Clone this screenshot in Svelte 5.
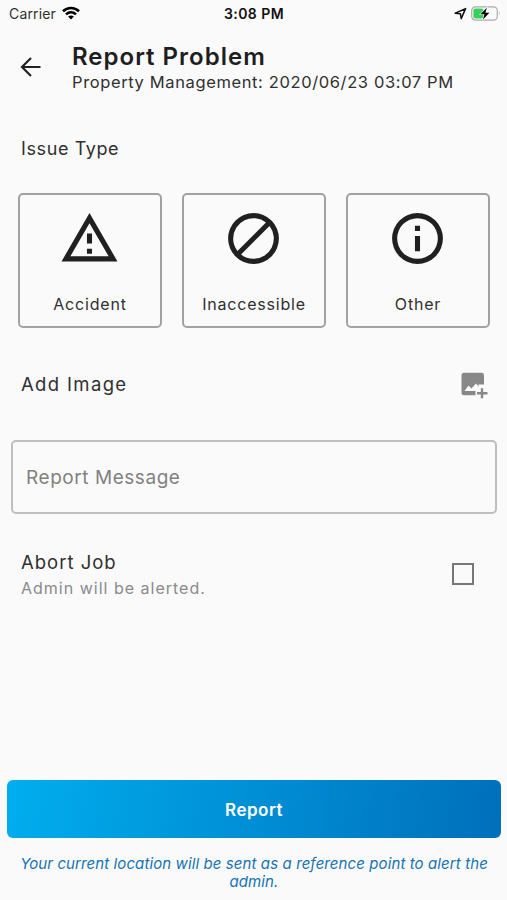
<script>
  let message = "";
  let abortJob = false;
  let selected = null;

  const issueTypes = [
    {
      label: "Accident",
      icon: "M12 5.99L19.53 19H4.47L12 5.99M12 2L1 21h22L12 2zm1 14h-2v2h2v-2zm0-6h-2v4h2v-4z",
    },
    {
      label: "Inaccessible",
      icon: "M12 2a10 10 0 1 0 0 20 10 10 0 0 0 0-20zM4 12a8 8 0 0 1 12.9-6.31L5.69 16.9A7.9 7.9 0 0 1 4 12zm8 8a7.9 7.9 0 0 1-4.9-1.69L18.31 7.1A8 8 0 0 1 12 20z",
    },
    {
      label: "Other",
      icon: "M11 7h2v2h-2zm0 4h2v6h-2zm1-9a10 10 0 1 0 0 20 10 10 0 0 0 0-20zm0 18a8 8 0 1 1 0-16 8 8 0 0 1 0 16z",
    },
  ];
</script>

<div class="screen">
  <div class="statusBar">
    <div class="carrier">
      <span>Carrier</span>
      <svg width="18" height="14" viewBox="0 0 18 14">
        <g fill="none" stroke="#000" stroke-width="2.6">
          <path d="M1 5.2C5.5 .9 12.5 .9 17 5.2" />
          <path d="M4 8.4C6.9 5.7 11.1 5.7 14 8.4" />
        </g>
        <path d="M9 13.4L6.1 10.6Q9 8.2 11.9 10.6z" />
      </svg>
    </div>
    <span class="time">3:08 PM</span>
    <div class="indicators">
      <svg width="13" height="13" viewBox="0 0 13 13">
        <path d="M1.2 6.3L11.6 1.6L7.2 11.6L6.4 6.7z" fill="none" stroke="#111" stroke-width="1.5" stroke-linejoin="round" />
      </svg>
      <svg width="30" height="15" viewBox="0 0 30 15">
        <rect x=".7" y=".9" width="25.6" height="13.2" rx="3.8" fill="none" stroke="#aaa" stroke-width="1.2" />
        <path d="M28 5.3q1.8 2.2 0 4.4z" fill="#aaa" />
        <rect x="2.4" y="2.6" width="10" height="9.8" rx="2" fill="#34d15c" />
        <path d="M15.8 1.8L9.4 8.2h4l-1.4 5.2L18.4 6.7h-4z" stroke="#fafafa" stroke-width="1.2" paint-order="stroke" />
      </svg>
    </div>
  </div>

  <header>
    <button class="back" aria-label="Back">
      <svg width="22" height="22" viewBox="0 0 22 22" fill="none" stroke="#222" stroke-width="2.2">
        <path d="M20.5 11H2.5M11 2L2 11l9 9" />
      </svg>
    </button>
    <div>
      <h1>Report Problem</h1>
      <p class="subtitle">Property Management: 2020/06/23 03:07 PM</p>
    </div>
  </header>

  <h2 class="issueTitle">Issue Type</h2>
  <div class="issues">
    {#each issueTypes as issue, index}
      <button class="issue" class:selected={selected === index} on:click={() => (selected = index)}>
        <svg width="61" height="61" viewBox="0 0 24 24"><path d={issue.icon} fill-rule="evenodd" /></svg>
        <span>{issue.label}</span>
      </button>
    {/each}
  </div>

  <div class="addImage">
    <h2>Add Image</h2>
    <button aria-label="Add image">
      <svg width="28" height="28" viewBox="0 0 28 28">
        <rect x="1.5" y="1.8" width="22.5" height="22.5" rx="2.5" fill="#888" />
        <path d="M4.500 20l4-5.500 3 3 4.500-5 3 3.500 3-1.500V20z" fill="#fafafa" />
        <path d="M15.500 17.500h3v-4h8v14h-11z" fill="#fafafa" />
        <path d="M22 17.300v10M17 22.300h10.500" stroke="#888" stroke-width="2.400" />
      </svg>
    </button>
  </div>

  <input class="message" bind:value={message} type="text" placeholder="Report Message" />

  <div class="abort">
    <div>
      <h2>Abort Job</h2>
      <p>Admin will be alerted.</p>
    </div>
    <input type="checkbox" bind:checked={abortJob} aria-label="Abort Job" />
  </div>

  <footer>
    <button class="report">Report</button>
    <p>Your current location will be sent as a reference point to alert the admin.</p>
  </footer>
</div>

<style>
  :global(body) {
    background: #fafafa;
  }
  .screen {
    display: flex;
    flex-direction: column;
    box-sizing: border-box;
    height: 900px;
    background: #fafafa;
    color: #303030;
    font-family: Inter, "Open Sans", sans-serif;
    overflow: hidden;
  }
  h1, h2, p {
    margin: 0;
  }
  button {
    padding: 0;
    border: none;
    background: none;
    color: inherit;
    font-family: inherit;
    cursor: pointer;
  }
  svg {
    display: block;
  }

  .statusBar {
    display: grid;
    grid-template-columns: 1fr auto 1fr;
    align-items: center;
    height: 27px;
    padding: 0 6px 0 9px;
    font-size: 14px;
  }
  .carrier {
    display: flex;
    align-items: center;
    gap: 6px;
    letter-spacing: 0.15px;
  }
  .carrier svg {
    margin-top: -2px;
  }
  .time {
    font-weight: 600;
    color: #111;
    letter-spacing: 0.45px;
    margin-right: 2px;
  }
  .indicators {
    display: flex;
    align-items: center;
    justify-content: flex-end;
    gap: 4px;
  }

  header {
    display: flex;
    height: 78px;
    padding: 16px 0 0 20px;
    box-sizing: border-box;
  }
  .back {
    width: 52px;
    height: 48px;
  }
  h1 {
    font-size: 24px;
    font-weight: 600;
    line-height: 28px;
    letter-spacing: 1px;
    color: #1e1e1e;
  }
  .subtitle {
    font-size: 16.5px;
    line-height: 23px;
    letter-spacing: 0.62px;
    white-space: nowrap;
  }
  h2 {
    font-size: 18.5px;
    font-weight: 400;
    line-height: 26px;
    letter-spacing: 1px;
  }
  .issueTitle {
    margin: 31px 21px 31px;
    font-size: 18px;
    letter-spacing: 0.6px;
  }

  .issues {
    display: flex;
    gap: 20px;
    padding-left: 18px;
  }
  .issue {
    display: flex;
    flex-direction: column;
    align-items: center;
    flex-shrink: 0;
    box-sizing: border-box;
    width: 144px;
    height: 135px;
    padding-top: 13px;
    border: 2px solid #a2a2a2;
    border-radius: 5px;
    font-size: 16px;
    line-height: 20px;
    letter-spacing: 0.8px;
  }
  .issue svg {
    fill: #202020;
    margin: 0 1px 25px 0;
  }
  .issue.selected {
    border-color: #0070bb;
  }

  .addImage {
    display: flex;
    align-items: center;
    justify-content: space-between;
    margin: 43px 19px 0 21px;
    height: 28px;
  }
  .addImage h2 {
    margin-top: -2px;
    letter-spacing: 1.35px;
  }

  .message {
    box-sizing: border-box;
    margin: 41px 10px 0 11px;
    height: 74px;
    padding: 0 13px;
    border: 2px solid #bebebe;
    border-radius: 5px;
    background: transparent;
    color: #303030;
    font-family: inherit;
    font-size: 19px;
    letter-spacing: 0.55px;
  }
  .message::placeholder {
    color: #818181;
    opacity: 1;
  }

  .abort {
    display: flex;
    justify-content: space-between;
    align-items: center;
    margin: 35px 33px 0 21px;
  }
  .abort p {
    color: #8a8a8a;
    font-size: 16px;
    line-height: 26px;
    letter-spacing: 1px;
  }
  .abort input {
    appearance: none;
    width: 22px;
    height: 22px;
    margin: -2px 0 0;
    border: 2px solid #777;
  }
  .abort input:checked {
    background: #0070bb;
  }

  footer {
    margin-top: auto;
    padding: 0 6px 9px 7px;
    text-align: center;
  }
  .report {
    display: block;
    width: 100%;
    height: 58px;
    padding-top: 2px;
    border-radius: 6px;
    background: linear-gradient(100deg, #00aeef, #006fba);
    color: white;
    font-size: 17px;
    font-weight: 600;
    letter-spacing: 0.5px;
  }
  footer p {
    margin: 17px 8px 0;
    color: #1673b3;
    font-size: 15px;
    font-style: italic;
    line-height: 18px;
    letter-spacing: 0.1px;
  }
</style>
